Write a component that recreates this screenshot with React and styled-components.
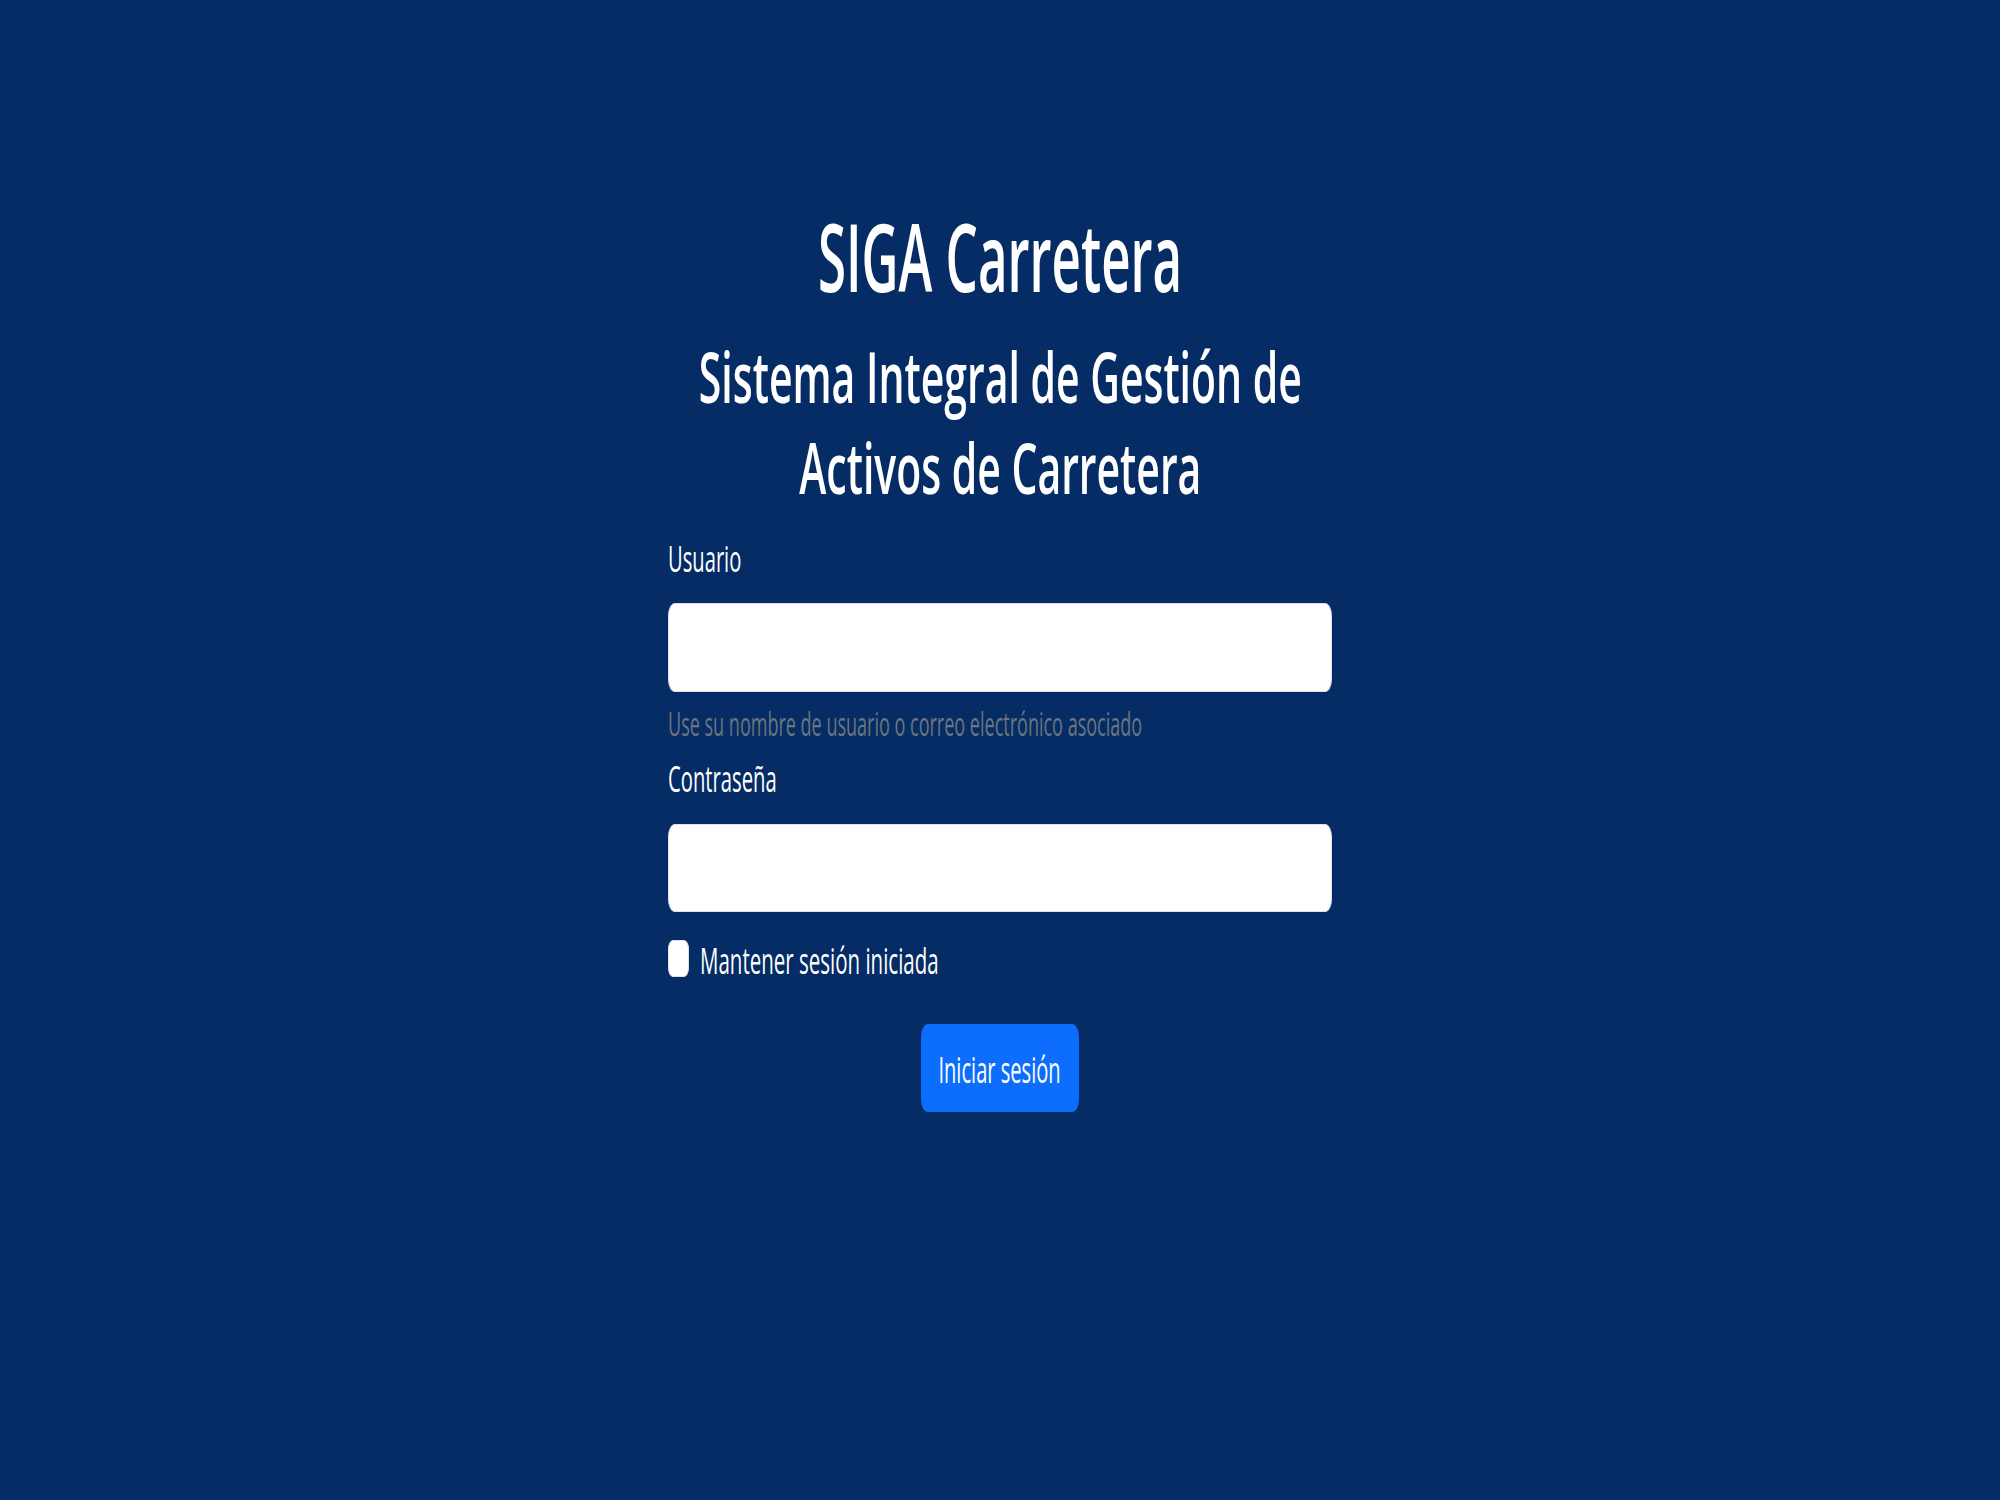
import React from "react";
import styled, { createGlobalStyle } from "styled-components";

const GlobalStyle = createGlobalStyle`
  html, body {
    margin: 0;
    padding: 0;
    background: #052c65;
  }
  body {
    font-family: "Open Sans", "Noto Sans", "Liberation Sans", sans-serif;
    color: #ffffff;
  }
  * { box-sizing: border-box; }
`;

const Page = styled.main`
  min-height: 100vh;
  display: flex;
  justify-content: center;
  padding-top: 205px;
  background: #052c65;
`;

const Column = styled.form`
  width: 664px;
  display: flex;
  flex-direction: column;
`;

const Squeeze = styled.span`
  display: inline-block;
  white-space: nowrap;
  transform: scaleX(${(p) => p.$sx});
  transform-origin: ${(p) => p.$origin || "left"} center;
`;

const Title = styled.h1`
  margin: 0;
  display: flex;
  justify-content: center;
  font-size: 95px;
  line-height: 100px;
  font-weight: 600;
  color: #ffffff;
  text-align: center;
`;

const Subtitle = styled.h2`
  margin: 26px 0 0;
  display: flex;
  justify-content: center;
  font-size: 70px;
  line-height: 91px;
  font-weight: 600;
  color: #ffffff;
  text-align: center;
`;

const Label = styled.label`
  display: block;
  margin-top: ${(p) => p.$mt}px;
  font-size: 37px;
  line-height: 44px;
  font-weight: 400;
  color: #ffffff;
`;

const Input = styled.input`
  display: block;
  width: 100%;
  height: ${(p) => p.$h}px;
  margin-top: ${(p) => p.$mt}px;
  background: #ffffff;
  border: 1px solid #dee2e6;
  border-radius: 7px / 13px;
  outline: none;
  padding: 0 16px;
  font-size: 37px;
`;

const Help = styled.div`
  margin-top: 13px;
  font-size: 32px;
  line-height: 38px;
  color: #6c757d;
`;

const CheckRow = styled.div`
  margin-top: 26px;
  display: flex;
  align-items: flex-start;
  gap: 11px;
`;

const Checkbox = styled.input`
  appearance: none;
  -webkit-appearance: none;
  flex: none;
  width: 21px;
  height: 37px;
  margin: 2px 0 0;
  background: #ffffff;
  border: 1px solid #dee2e6;
  border-radius: 5px / 9px;
`;

const CheckLabel = styled.label`
  font-size: 37px;
  line-height: 44px;
  color: #ffffff;
`;

const ButtonRow = styled.div`
  margin-top: 42px;
  display: flex;
  justify-content: center;
`;

const Button = styled.button`
  width: 158px;
  height: 88px;
  display: flex;
  align-items: center;
  justify-content: center;
  background: #0d6efd;
  border: none;
  border-radius: 7px / 13px;
  color: #ffffff;
  font-family: inherit;
  font-size: 37px;
  line-height: 44px;
  padding: 0;
  padding-top: 2px;
  overflow: visible;
`;

export default function App() {
  return (
    <>
      <GlobalStyle />
      <Page>
        <Column onSubmit={(e) => e.preventDefault()}>
          <Title>
            <Squeeze $sx={0.537} $origin="center">SIGA Carretera</Squeeze>
          </Title>
          <Subtitle>
            <Squeeze $sx={0.585} $origin="center">
              Sistema Integral de Gestión de
              <br />
              Activos de Carretera
            </Squeeze>
          </Subtitle>
          <Label htmlFor="usuario" $mt={23}>
            <Squeeze $sx={0.545}>Usuario</Squeeze>
          </Label>
          <Input id="usuario" type="text" $h={89} $mt={23} />
          <Help>
            <Squeeze $sx={0.563}>
              Use su nombre de usuario o correo electrónico asociado
            </Squeeze>
          </Help>
          <Label htmlFor="password" $mt={13}>
            <Squeeze $sx={0.547}>Contraseña</Squeeze>
          </Label>
          <Input id="password" type="password" $h={88} $mt={24} />
          <CheckRow>
            <Checkbox id="remember" type="checkbox" />
            <CheckLabel htmlFor="remember">
              <Squeeze $sx={0.554}>Mantener sesión iniciada</Squeeze>
            </CheckLabel>
          </CheckRow>
          <ButtonRow>
            <Button type="submit">
              <Squeeze $sx={0.543} $origin="center">
                Iniciar sesión
              </Squeeze>
            </Button>
          </ButtonRow>
        </Column>
      </Page>
    </>
  );
}
